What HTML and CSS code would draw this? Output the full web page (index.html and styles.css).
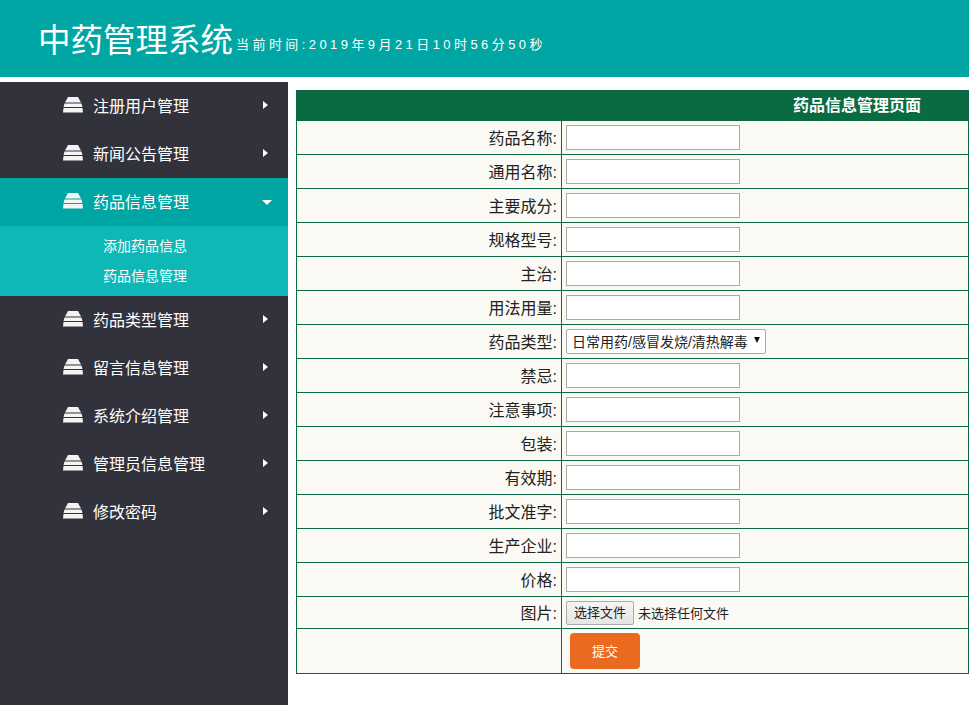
FILE: index.html
```html
<!DOCTYPE html>
<html lang="zh-CN">
<head>
  <meta charset="UTF-8" />
  <title>中药管理系统</title>
  <link rel="stylesheet" href="styles.css">
</head>
<body>
  <div class="header">
    <span class="logo">中药管理系统</span><span class="clock">当前时间:2019年9月21日10时56分50秒</span>
  </div>
  <div class="main">
    <ul class="sidebar">
      <li class="menu"><svg class="ico" viewBox="0 0 20 16"><path d="M5 0h10l3 5.500H2z"/><path d="M1.500 6.500h17l1 3.500H.5z"/><path d="M.5 11h19l.5 4.500H0z"/></svg>注册用户管理<i class="arrow"></i></li>
      <li class="menu"><svg class="ico" viewBox="0 0 20 16"><path d="M5 0h10l3 5.500H2z"/><path d="M1.500 6.500h17l1 3.500H.5z"/><path d="M.5 11h19l.5 4.500H0z"/></svg>新闻公告管理<i class="arrow"></i></li>
      <li class="menu active"><svg class="ico" viewBox="0 0 20 16"><path d="M5 0h10l3 5.500H2z"/><path d="M1.500 6.500h17l1 3.500H.5z"/><path d="M.5 11h19l.5 4.500H0z"/></svg>药品信息管理<i class="arrow down"></i></li>
      <li class="sub">
        <a>添加药品信息</a>
        <a>药品信息管理</a>
      </li>
      <li class="menu"><svg class="ico" viewBox="0 0 20 16"><path d="M5 0h10l3 5.500H2z"/><path d="M1.500 6.500h17l1 3.500H.5z"/><path d="M.5 11h19l.5 4.500H0z"/></svg>药品类型管理<i class="arrow"></i></li>
      <li class="menu"><svg class="ico" viewBox="0 0 20 16"><path d="M5 0h10l3 5.500H2z"/><path d="M1.500 6.500h17l1 3.500H.5z"/><path d="M.5 11h19l.5 4.500H0z"/></svg>留言信息管理<i class="arrow"></i></li>
      <li class="menu"><svg class="ico" viewBox="0 0 20 16"><path d="M5 0h10l3 5.500H2z"/><path d="M1.500 6.500h17l1 3.500H.5z"/><path d="M.5 11h19l.5 4.500H0z"/></svg>系统介绍管理<i class="arrow"></i></li>
      <li class="menu"><svg class="ico" viewBox="0 0 20 16"><path d="M5 0h10l3 5.500H2z"/><path d="M1.500 6.500h17l1 3.500H.5z"/><path d="M.5 11h19l.5 4.500H0z"/></svg>管理员信息管理<i class="arrow"></i></li>
      <li class="menu"><svg class="ico" viewBox="0 0 20 16"><path d="M5 0h10l3 5.500H2z"/><path d="M1.500 6.500h17l1 3.500H.5z"/><path d="M.5 11h19l.5 4.500H0z"/></svg>修改密码<i class="arrow"></i></li>
    </ul>
    <div class="content">
      <table class="form-table">
        <tr><th colspan="2">药品信息管理页面</th></tr>
        <tr><td class="lbl">药品名称:</td><td><input type="text" class="txt"></td></tr>
        <tr><td class="lbl">通用名称:</td><td><input type="text" class="txt"></td></tr>
        <tr><td class="lbl">主要成分:</td><td><input type="text" class="txt"></td></tr>
        <tr><td class="lbl">规格型号:</td><td><input type="text" class="txt"></td></tr>
        <tr><td class="lbl">主治:</td><td><input type="text" class="txt"></td></tr>
        <tr><td class="lbl">用法用量:</td><td><input type="text" class="txt"></td></tr>
        <tr><td class="lbl">药品类型:</td><td><div class="sel-wrap"><select class="sel"><option>日常用药/感冒发烧/清热解毒</option></select></div></td></tr>
        <tr><td class="lbl">禁忌:</td><td><input type="text" class="txt"></td></tr>
        <tr><td class="lbl">注意事项:</td><td><input type="text" class="txt"></td></tr>
        <tr><td class="lbl">包装:</td><td><input type="text" class="txt"></td></tr>
        <tr><td class="lbl">有效期:</td><td><input type="text" class="txt"></td></tr>
        <tr><td class="lbl">批文准字:</td><td><input type="text" class="txt"></td></tr>
        <tr><td class="lbl">生产企业:</td><td><input type="text" class="txt"></td></tr>
        <tr><td class="lbl">价格:</td><td><input type="text" class="txt"></td></tr>
        <tr class="file-row"><td class="lbl">图片:</td><td><span class="file-btn">选择文件</span><span class="file-name">未选择任何文件</span></td></tr>
        <tr class="submit-row"><td class="lbl"></td><td><button type="button" class="btn">提交</button></td></tr>
      </table>
    </div>
  </div>
</body>
</html>
```

FILE: styles.css
```css
* { box-sizing: border-box; }
html, body { margin: 0; padding: 0; }
body { font-family: "Liberation Sans", "Noto Sans CJK SC", sans-serif; background: #fff; height: 705px; overflow: hidden; }

.header { height: 77px; background: #00a6a3; color: #fff; padding-left: 38px; display: flex; align-items: center; }
.logo { font-size: 32.500px; margin-bottom: 3px; }
.clock { font-size: 13px; letter-spacing: 3.430px; margin-top: 10px; margin-left: 3px; }

.main { display: flex; margin-top: 5px; gap: 8px; }
.sidebar { list-style: none; margin: 0; padding: 0; width: 288px; height: 623px; background: #32323c; flex: none; }
.menu { height: 48px; display: flex; align-items: center; padding-left: 63px; padding-bottom: 2px; color: #fff; font-size: 16px; position: relative; }
.menu.active { background: #00a6a3; }
.ico { width: 20px; height: 16px; fill: #f4f4f4; margin-right: 10px; }
.arrow { position: absolute; left: 263px; top: 19px; border-left: 5px solid #fff; border-top: 4.500px solid transparent; border-bottom: 4.500px solid transparent; }
.arrow.down { left: 262px; top: 22px; border-top: 5px solid #fff; border-left: 5px solid transparent; border-right: 5px solid transparent; border-bottom: 0; }
.sub { height: 70px; background: #0db8b6; padding: 5px 0 0 103px; }
.sub a { display: block; height: 30px; line-height: 30px; color: #fff; font-size: 14px; }

.content { flex: 1; padding-top: 8px; min-width: 0; }
.form-table { border-collapse: collapse; width: 673px; background: #fbf9f3; font-size: 16px; color: #222; }
.form-table th { background: #0a6b43; color: #fff; height: 30px; padding: 0 0 4px 496px; text-align: left; font-size: 16px; border: 1px solid #0a6b43; }
.form-table td { border: 1px solid #0a6b43; height: 34px; padding: 0 4px; }
.form-table .lbl { width: 265px; text-align: right; padding-bottom: 2px; }
.txt { display: block; width: 174px; height: 25px; border: 1px solid #aaa; background: #fff; padding: 0; }
.sel-wrap { position: relative; width: 200px; }
.sel-wrap::after { content: ""; position: absolute; right: 6px; top: 8px; border-top: 6px solid #111; border-left: 3.500px solid transparent; border-right: 3.500px solid transparent; }
.sel { display: block; width: 200px; height: 25px; padding: 0 5px; font-family: inherit; font-size: 14px; color: #222; background: #fff; border: 1px solid #aaa; border-radius: 2px; appearance: none; }
.file-row td { height: 32px; }
.file-btn { display: inline-block; font-size: 13px; height: 24px; line-height: 22px; padding: 0 7px; background: linear-gradient(#f4f4f4, #e4e4e4); border: 1px solid #aaa; border-radius: 2px; color: #222; vertical-align: middle; }
.file-name { font-size: 13px; margin-left: 4px; vertical-align: middle; }
.submit-row td { height: 45px; }
.btn { display: block; margin-left: 4px; width: 70px; height: 36px; padding: 0 0 2px; background: #ea6b20; color: #fff; border: none; border-radius: 4px; font-family: inherit; font-size: 13px; }
```
